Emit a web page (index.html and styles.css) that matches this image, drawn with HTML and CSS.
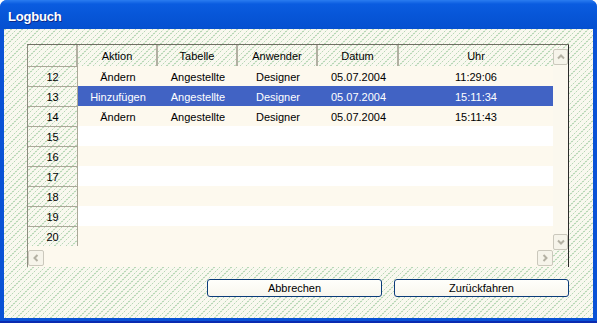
FILE: index.html
```html
<!DOCTYPE html>
<html>
<head>
<meta charset="utf-8">
<link rel="stylesheet" href="styles.css">
</head>
<body>
<div class="window">
  <div class="titlebar"><span class="title">Logbuch</span></div>
  <div class="client">
    <div class="grid">
      <div class="gmain">
        <div class="row header">
          <div class="hc corner"></div>
          <div class="hc">Aktion</div>
          <div class="hc">Tabelle</div>
          <div class="hc">Anwender</div>
          <div class="hc">Datum</div>
          <div class="hc last">Uhr</div>
        </div>
        <div class="row odd"><div class="rn">12</div><div class="c">Ändern</div><div class="c">Angestellte</div><div class="c">Designer</div><div class="c">05.07.2004</div><div class="c">11:29:06</div></div>
        <div class="row sel"><div class="rn">13</div><div class="c">Hinzufügen</div><div class="c">Angestellte</div><div class="c">Designer</div><div class="c">05.07.2004</div><div class="c">15:11:34</div></div>
        <div class="row odd"><div class="rn">14</div><div class="c">Ändern</div><div class="c">Angestellte</div><div class="c">Designer</div><div class="c">05.07.2004</div><div class="c">15:11:43</div></div>
        <div class="row even"><div class="rn">15</div><div class="c fill"></div></div>
        <div class="row odd"><div class="rn">16</div><div class="c fill"></div></div>
        <div class="row even"><div class="rn">17</div><div class="c fill"></div></div>
        <div class="row odd"><div class="rn">18</div><div class="c fill"></div></div>
        <div class="row even"><div class="rn">19</div><div class="c fill"></div></div>
        <div class="row odd"><div class="rn">20</div><div class="c fill"></div></div>
        <div class="hscroll">
          <div class="arrow"><svg width="8" height="8" viewBox="0 0 8 8"><polyline points="5.5,1 2.5,4 5.5,7" fill="none" stroke="#b4b1a3" stroke-width="2"/></svg></div>
          <div class="arrow"><svg width="8" height="8" viewBox="0 0 8 8"><polyline points="2.5,1 5.5,4 2.5,7" fill="none" stroke="#b4b1a3" stroke-width="2"/></svg></div>
        </div>
      </div>
      <div class="vscroll">
        <div class="vtop"></div>
        <div class="arrow"><svg width="8" height="8" viewBox="0 0 8 8"><polyline points="1,5.5 4,2.5 7,5.5" fill="none" stroke="#b4b1a3" stroke-width="2"/></svg></div>
        <div class="track"></div>
        <div class="arrow"><svg width="8" height="8" viewBox="0 0 8 8"><polyline points="1,2.5 4,5.5 7,2.5" fill="none" stroke="#b4b1a3" stroke-width="2"/></svg></div>
        <div class="vbottom"></div>
      </div>
    </div>
    <div class="buttons">
      <button class="btn">Abbrechen</button>
      <button class="btn">Zurückfahren</button>
    </div>
  </div>
</div>
</body>
</html>
```
FILE: styles.css
```css
* { box-sizing: border-box; }
html, body { margin: 0; padding: 0; background: #ffffff; }
body { font-family: "Liberation Sans", Arial, sans-serif; font-size: 11px; color: #000; }

.window {
  width: 597px;
  height: 323px;
  display: flex;
  flex-direction: column;
  background: #0a52d6;
  border-radius: 7px 7px 0 0;
  border-bottom: 2px solid #0a2bb0;
  overflow: hidden;
}
.titlebar {
  height: 29px;
  flex: none;
  display: flex;
  align-items: center;
  padding: 3px 0 0 8px;
  background: linear-gradient(#2a7cf0 0, #0a5ce0 4px, #0756d8 50%, #0550d0 100%);
}
.title {
  color: #fff;
  font-weight: bold;
  font-size: 13px;
  letter-spacing: -0.2px;
  text-shadow: 1px 1px 0 #0b2a8a;
}
.client, .hc, .rn, .vtop, .vbottom {
  background-color: #f9f8ef;
  background-image:
    repeating-linear-gradient(0deg, rgba(249,248,239,0.7) 0 1px, rgba(249,248,239,0) 1px 2px),
    repeating-linear-gradient(135deg, #b8d8b6 0 1px, rgba(249,248,239,0) 1px 4px);
  background-attachment: fixed;
}
.client {
  flex: 1;
  margin: 0 4px 3px 4px;
  display: flex;
  flex-direction: column;
}

.grid {
  margin: 15px 0 0 23px;
  width: 542px;
  height: 223px;
  display: flex;
  border-top: 1px solid #716f64;
  border-left: 1px solid #8e8c80;
}
.gmain {
  width: 525px;
  display: flex;
  flex-direction: column;
}
.row {
  display: grid;
  grid-template-columns: 50px 80px 80px 80px 81px 154px;
  height: 20px;
}
.row.header { height: 21px; }
.hc {
  display: flex;
  align-items: center;
  justify-content: center;
  border-right: 2px solid #b2afa2;
  padding-top: 1px;
}
.hc.last { border-right: none; }
.rn {
  display: flex;
  align-items: center;
  justify-content: center;
  border-top: 1px solid #aca899;
  border-right: 1px solid #aca899;
  padding-top: 1px;
}
.c {
  display: flex;
  align-items: center;
  justify-content: center;
  padding-top: 1px;
}
.c.fill { grid-column: 2 / 7; }
.row.odd .c { background: #fdf9ee; }
.row.even .c { background: #ffffff; }
.row.sel .c { background: #4163c4; color: #ffffff; }

.hscroll {
  flex: 1;
  display: flex;
  justify-content: space-between;
  align-items: flex-start;
  padding-top: 4px;
  background: #fdf9ee;
}
.vscroll {
  width: 16px;
  display: flex;
  flex-direction: column;
  border-right: 1px solid #2b2b2b;
}
.vtop { height: 4px; }
.track { flex: 1; background: #fbf8ee; }
.vbottom { height: 17px; }
.arrow {
  width: 16px;
  height: 16px;
  flex: none;
  display: flex;
  align-items: center;
  justify-content: center;
  border: 1px solid #cbc8bc;
  border-radius: 2px;
  background: #f6f4ea;
}
.vscroll .arrow { width: 15px; }

.buttons {
  display: flex;
  justify-content: flex-end;
  gap: 12px;
  margin: 12px 24px 0 0;
}
.btn {
  width: 175px;
  height: 18px;
  padding: 0;
  border: 1px solid #0b3c7a;
  border-radius: 3px;
  background: linear-gradient(#fffffb, #f8f6ee);
  font-family: "Liberation Sans", Arial, sans-serif;
  font-size: 11px;
  color: #000;
}
```
